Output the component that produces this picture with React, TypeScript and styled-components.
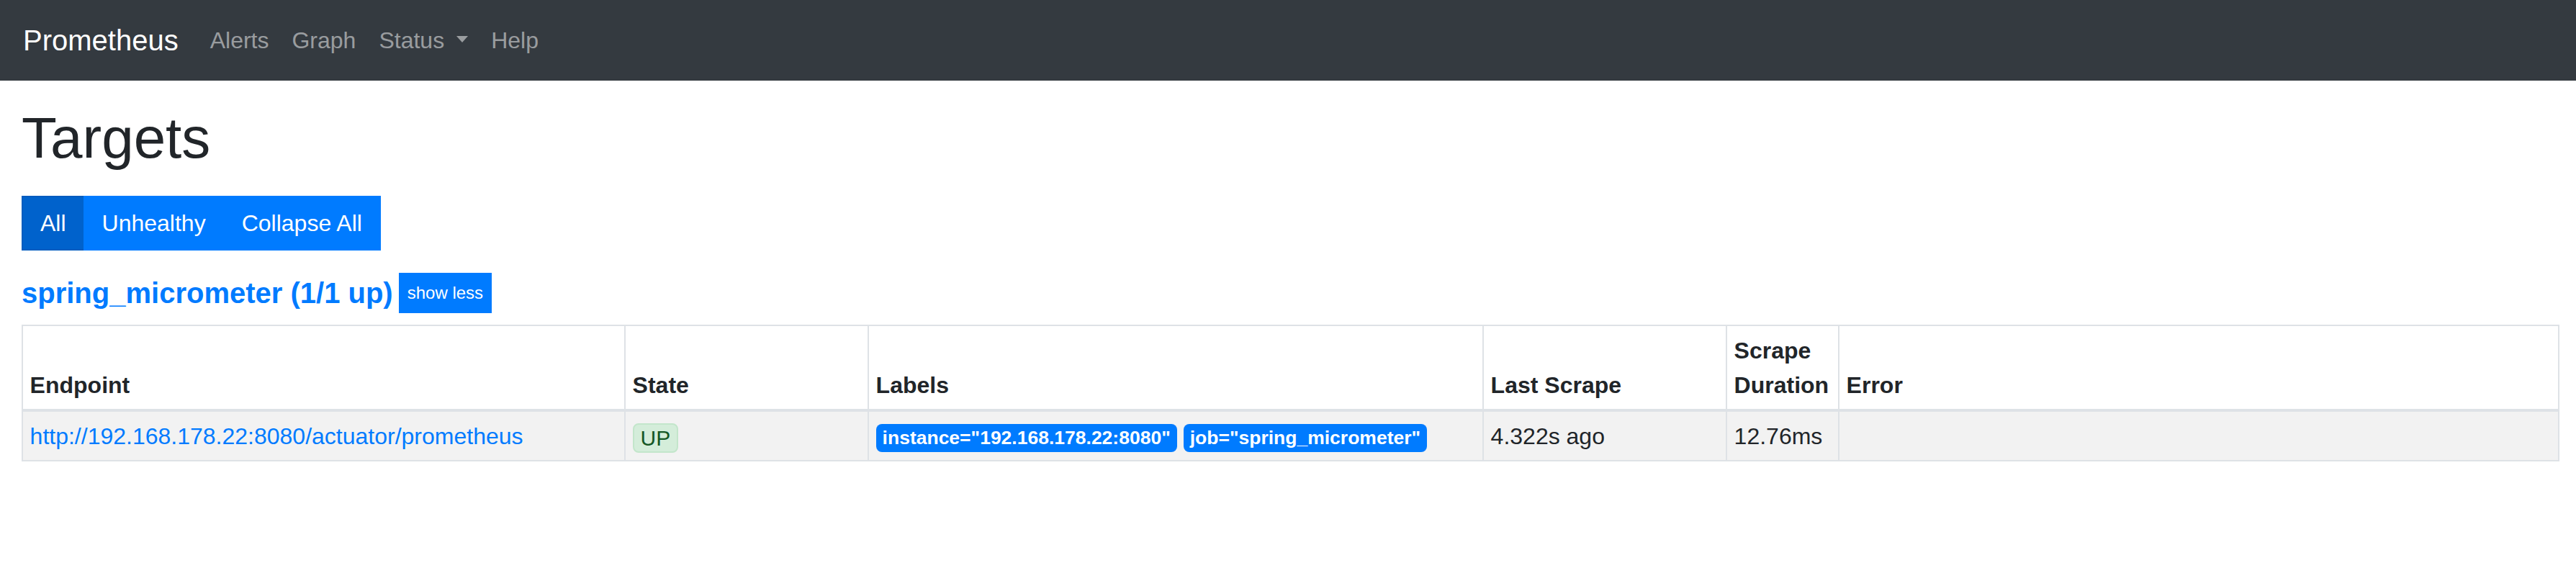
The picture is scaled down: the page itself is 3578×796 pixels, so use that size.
import React from 'react'
import styled, { createGlobalStyle } from 'styled-components'

const colors = {
  dark: '#343a40',
  primary: '#007bff',
  primaryActive: '#0062cc',
  primaryActiveBorder: '#005cbf',
  text: '#212529',
  border: '#dee2e6',
  stripe: '#f2f2f2',
  navMuted: 'rgba(255, 255, 255, 0.5)'
}

const GlobalStyle = createGlobalStyle`
  html, body {
    margin: 0;
    padding: 0;
    background: #fff;
  }
  body {
    font-family: "Liberation Sans", Helvetica, Arial, sans-serif;
    font-size: 32px;
    line-height: 1.5;
    color: ${colors.text};
  }
  * {
    box-sizing: border-box;
  }
`

const Navbar = styled.nav`
  display: flex;
  align-items: center;
  height: 112px;
  padding: 16px 32px;
  background-color: ${colors.dark};
  margin-bottom: 32px;
`

const Brand = styled.a`
  font-size: 40px;
  line-height: 60px;
  padding: 10px 0;
  margin-right: 28px;
  color: #fff;
  text-decoration: none;
`

const NavList = styled.div`
  display: flex;
  align-items: center;
`

const NavLink = styled.a`
  padding: 16px;
  line-height: 48px;
  color: ${colors.navMuted};
  text-decoration: none;
  white-space: nowrap;
`

const Caret = styled.span`
  display: inline-block;
  margin-left: 17px;
  vertical-align: 8px;
  border-top: 9px solid;
  border-right: 8px solid transparent;
  border-left: 8px solid transparent;
`

const Container = styled.main`
  padding: 0 25px 0 30px;
`

const Title = styled.h1`
  margin: 0 0 16px;
  font-size: 80px;
  font-weight: 500;
  line-height: 96px;
`

const ButtonGroup = styled.div`
  display: inline-flex;
  margin-top: 16px;
`

const FilterButton = styled.button<{ $active?: boolean }>`
  font-family: inherit;
  font-size: 32px;
  line-height: 48px;
  padding: 12px 24px;
  color: #fff;
  border: 2px solid ${({ $active }) => ($active ? colors.primaryActiveBorder : colors.primary)};
  background-color: ${({ $active }) => ($active ? colors.primaryActive : colors.primary)};
  border-radius: 0;
  & + & {
    margin-left: -2px;
  }
`

const PoolHeader = styled.div`
  display: flex;
  align-items: center;
  gap: 8px;
  margin: 31px 0 16px;
`

const PoolLink = styled.a`
  font-size: 40px;
  font-weight: 700;
  line-height: 48px;
  color: ${colors.primary};
  text-decoration: none;
  white-space: nowrap;
`

const ToggleButton = styled.button`
  font-family: inherit;
  font-size: 24px;
  line-height: 36px;
  padding: 8px 10px;
  color: #fff;
  background-color: ${colors.primary};
  border: 2px solid ${colors.primary};
  border-radius: 0;
`

const Table = styled.table`
  width: 100%;
  table-layout: fixed;
  border-collapse: collapse;
  border: 2px solid ${colors.border};
`

const Th = styled.th`
  padding: 9.6px;
  text-align: left;
  vertical-align: bottom;
  font-weight: 700;
  line-height: 48px;
  border: 2px solid ${colors.border};
  border-bottom-width: 4px;
`

const Row = styled.tr<{ $striped?: boolean }>`
  background-color: ${({ $striped }) => ($striped ? colors.stripe : 'transparent')};
`

const Td = styled.td`
  padding: 9.6px;
  vertical-align: top;
  line-height: 48px;
  border: 2px solid ${colors.border};
  white-space: nowrap;
`

const EndpointLink = styled.a`
  color: ${colors.primary};
  text-decoration: none;
`

const StateBadge = styled.span`
  display: inline-block;
  font-size: 30px;
  line-height: 33px;
  padding: 2px 9px;
  color: #155724;
  background-color: #d4edda;
  border: 2px solid #c3e6cb;
  border-radius: 8px;
  vertical-align: middle;
`

const LabelBadge = styled.span`
  display: inline-block;
  font-size: 26.5px;
  font-weight: 700;
  line-height: 1;
  padding: 6px 9px;
  margin-right: 9px;
  color: #fff;
  background-color: ${colors.primary};
  border-radius: 8px;
  vertical-align: middle;
`

const columns = [
  { title: 'Endpoint', width: 837 },
  { title: 'State', width: 338 },
  { title: 'Labels', width: 854 },
  { title: 'Last Scrape', width: 338 },
  { title: 'Scrape Duration', width: 156 },
  { title: 'Error', width: 1000 }
]

const targets = [
  {
    endpoint: 'http://192.168.178.22:8080/actuator/prometheus',
    state: 'UP',
    labels: { instance: '192.168.178.22:8080', job: 'spring_micrometer' },
    lastScrape: '4.322s ago',
    duration: '12.76ms',
    error: ''
  }
]

export default function App () {
  return (
    <>
      <GlobalStyle />
      <Navbar>
        <Brand href="#">Prometheus</Brand>
        <NavList>
          <NavLink href="#">Alerts</NavLink>
          <NavLink href="#">Graph</NavLink>
          <NavLink href="#">Status<Caret /></NavLink>
          <NavLink href="#">Help</NavLink>
        </NavList>
      </Navbar>
      <Container>
        <Title>Targets</Title>
        <ButtonGroup>
          <FilterButton $active>All</FilterButton>
          <FilterButton>Unhealthy</FilterButton>
          <FilterButton>Collapse All</FilterButton>
        </ButtonGroup>
        <PoolHeader>
          <PoolLink href="#">spring_micrometer (1/1 up)</PoolLink>
          <ToggleButton>show less</ToggleButton>
        </PoolHeader>
        <Table>
          <colgroup>
            {columns.map(c => <col key={c.title} style={{ width: c.width }} />)}
          </colgroup>
          <thead>
            <tr>
              {columns.map(c => <Th key={c.title}>{c.title}</Th>)}
            </tr>
          </thead>
          <tbody>
            {targets.map((t, index) => (
              <Row $striped={index % 2 === 0} key={t.endpoint}>
                <Td><EndpointLink href="#">{t.endpoint}</EndpointLink></Td>
                <Td><StateBadge>{t.state}</StateBadge></Td>
                <Td>
                  {Object.entries(t.labels).map(([k, v]) => (
                    <LabelBadge key={k}>{`${k}="${v}"`}</LabelBadge>
                  ))}
                </Td>
                <Td>{t.lastScrape}</Td>
                <Td>{t.duration}</Td>
                <Td>{t.error}</Td>
              </Row>
            ))}
          </tbody>
        </Table>
      </Container>
    </>
  )
}
